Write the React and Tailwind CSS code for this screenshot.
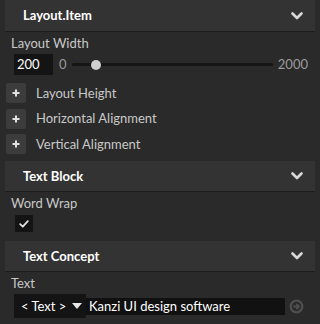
import React from "react";

function Chevron() {
  return (
    <svg width="12" height="8" viewBox="0 0 12 8">
      <path d="M1.5 1.5 L6 6 L10.5 1.5" fill="none" stroke="#d8d8d8" strokeWidth="2.6" strokeLinecap="round" strokeLinejoin="round" />
    </svg>
  );
}

function Header({ title, tall }) {
  return (
    <div className={`mx-[5px] flex shrink-0 items-center justify-between border-b border-[#1c1c1c] bg-[#333333] pl-[18px] pr-[12px] ${tall ? "h-[32px]" : "h-[31px]"}`}>
      <span className="text-[13px] font-bold leading-none text-white">{title}</span>
      <Chevron />
    </div>
  );
}

function Label({ children, h }) {
  return (
    <div className={`flex shrink-0 items-center pl-[11px] text-[13px] leading-none text-[#c8c8c8] ${h}`}>{children}</div>
  );
}

function PlusRow({ label }) {
  return (
    <div className="flex h-[20px] shrink-0 items-center pl-[6px]">
      <div className="flex h-[20px] w-[20px] shrink-0 items-center justify-center rounded-[2px] bg-[#3c3c3c]">
        <svg width="8" height="8" viewBox="0 0 8 8">
          <path d="M4 0.5 V7.5 M0.5 4 H7.5" stroke="#e0e0e0" strokeWidth="2" />
        </svg>
      </div>
      <span className="ml-[10px] text-[13px] leading-none text-[#c8c8c8]">{label}</span>
    </div>
  );
}

export default function App() {
  return (
    <div className="flex h-[324px] w-[320px] flex-col overflow-hidden bg-[#2a2a2a]" style={{ fontFamily: 'Lato, "Noto Sans", sans-serif' }}>
      <Header title="Layout.Item" tall />

      {/* Layout Width */}
      <Label h="h-[22px]">Layout Width</Label>
      <div className="flex h-[21px] shrink-0 items-center pl-[14px] pr-[12px]">
        <div className="flex h-[21px] w-[39px] items-center bg-[#141414] pl-[3px] text-[13px] leading-none text-white">200</div>
        <span className="ml-[6px] text-[13px] leading-none text-[#9a9a9a]">0</span>
        <div className="relative ml-[5px] h-[3px] flex-1 rounded-full bg-[#151515]">
          <div className="absolute left-[19px] top-1/2 h-[10px] w-[10px] -translate-y-1/2 rounded-full bg-[#d0d0d0]" />
        </div>
        <span className="ml-[5px] text-[13px] leading-none text-[#9a9a9a]">2000</span>
      </div>

      <div className="mt-[8px] flex flex-col gap-[5.5px]">
        <PlusRow label="Layout Height" />
        <PlusRow label="Horizontal Alignment" />
        <PlusRow label="Vertical Alignment" />
      </div>

      <div className="mt-[7px]">
        <Header title="Text Block" />
      </div>
      <Label h="h-[22px]">Word Wrap</Label>
      <div className="ml-[15px] mt-[1px] flex h-[17px] w-[18px] shrink-0 items-center justify-center bg-[#141414]">
        <svg width="10" height="8" viewBox="0 0 10 8">
          <path d="M1.2 4.2 L3.8 6.6 L8.8 1.2" fill="none" stroke="#e0e0e0" strokeWidth="1.8" strokeLinecap="round" strokeLinejoin="round" />
        </svg>
      </div>

      <div className="mt-[9px]">
        <Header title="Text Concept" />
      </div>
      <Label h="h-[22px]">Text</Label>
      <div className="flex h-[24px] shrink-0 items-center pl-[14px]">
        <div className="flex h-[24px] w-[72px] shrink-0 items-center justify-between bg-[#141414] pl-[7px] pr-[4px] text-[13px] leading-none text-white">
          <span>&lt; Text &gt;</span>
          <svg width="10" height="6" viewBox="0 0 10 6">
            <path d="M0 0 L10 0 L5 6 Z" fill="#e8e8e8" />
          </svg>
        </div>
        <div className="flex h-[17px] w-[199px] shrink-0 items-center bg-[#111111] pl-[3px] text-[13px] leading-none text-white">
          Kanzi UI design software
        </div>
        <svg width="15" height="15" viewBox="0 0 16 16" className="ml-[4px] shrink-0">
          <circle cx="8" cy="8" r="6.2" fill="none" stroke="#4e4e4e" strokeWidth="2.4" />
          <path d="M4.5 8 H10 M7.8 5.2 L10.6 8 L7.8 10.8" fill="none" stroke="#4e4e4e" strokeWidth="2.2" />
        </svg>
      </div>
    </div>
  );
}
